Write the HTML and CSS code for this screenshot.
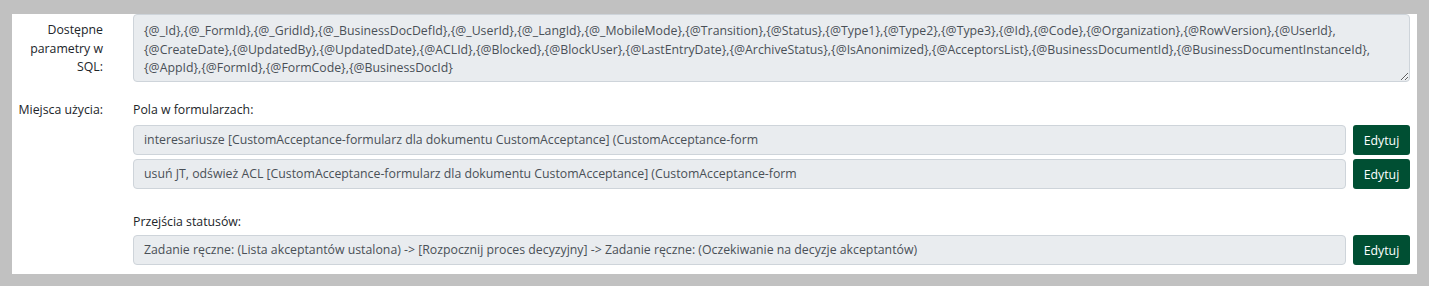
FILE: index.html
```html
<!DOCTYPE html>
<html lang="pl">
<head>
<meta charset="utf-8">
<title>Parametry</title>
<link rel="stylesheet" href="styles.css">
</head>
<body>
<div class="panel">
  <div class="row">
    <div class="label multi">Dostępne parametry w SQL:</div>
    <div class="content">
      <textarea class="params" readonly>{@_Id},{@_FormId},{@_GridId},{@_BusinessDocDefId},{@_UserId},{@_LangId},{@_MobileMode},{@Transition},{@Status},{@Type1},{@Type2},{@Type3},{@Id},{@Code},{@Organization},{@RowVersion},{@UserId},
{@CreateDate},{@UpdatedBy},{@UpdatedDate},{@ACLId},{@Blocked},{@BlockUser},{@LastEntryDate},{@ArchiveStatus},{@IsAnonimized},{@AcceptorsList},{@BusinessDocumentId},{@BusinessDocumentInstanceId},
{@AppId},{@FormId},{@FormCode},{@BusinessDocId}</textarea>
    </div>
  </div>
  <div class="row usage">
    <div class="label single">Miejsca użycia:</div>
    <div class="content">
      <div class="section-title">Pola w formularzach:</div>
      <div class="group">
        <div class="field">interesariusze [CustomAcceptance-formularz dla dokumentu CustomAcceptance] (CustomAcceptance-form</div>
        <button class="btn">Edytuj</button>
      </div>
      <div class="group">
        <div class="field">usuń JT, odśwież ACL [CustomAcceptance-formularz dla dokumentu CustomAcceptance] (CustomAcceptance-form</div>
        <button class="btn">Edytuj</button>
      </div>
      <div class="section-title second">Przejścia statusów:</div>
      <div class="group">
        <div class="field">Zadanie ręczne: (Lista akceptantów ustalona) -&gt; [Rozpocznij proces decyzyjny] -&gt; Zadanie ręczne: (Oczekiwanie na decyzje akceptantów)</div>
        <button class="btn">Edytuj</button>
      </div>
    </div>
  </div>
</div>
</body>
</html>
```
FILE: styles.css
```css
html, body {
  margin: 0;
  padding: 0;
}
body {
  background: #c1c1c1;
  font-family: "Open Sans", "Noto Sans", sans-serif;
  font-size: 12.3px;
  color: #212529;
  padding: 14px 12px 12px 12px;
  height: 286px;
  box-sizing: border-box;
}
.panel {
  background: #ffffff;
  height: 260px;
  padding: 0 7px 0 0;
  box-sizing: border-box;
}
.row {
  display: flex;
}
.label {
  width: 121px;
  flex: none;
  box-sizing: border-box;
  padding: 0 30px 0 8px;
  text-align: right;
  line-height: 18.5px;
  color: #212529;
}
.label.multi {
  padding-top: 7px;
}
.label.single {
  white-space: nowrap;
  padding-left: 0;
}
.content {
  flex: 1;
  min-width: 0;
}
.params {
  display: block;
  width: 100%;
  height: 68px;
  box-sizing: border-box;
  margin: 0;
  padding: 7px 10px;
  border: 1px solid #ced4da;
  border-radius: 4px;
  background: #e9ecef;
  color: #495057;
  font-family: inherit;
  font-size: 12.3px;
  line-height: 18.5px;
  resize: vertical;
  overflow: hidden;
  white-space: pre-wrap;
}
.usage {
  margin-top: 19px;
}
.usage .label {
  line-height: 18px;
}
.section-title {
  line-height: 18px;
  margin-bottom: 6px;
}
.section-title.second {
  margin-top: 24px;
  margin-bottom: 4px;
}
.group {
  display: flex;
  gap: 7px;
  margin-bottom: 4px;
}
.field {
  flex: 1;
  height: 30px;
  box-sizing: border-box;
  padding: 0 10px;
  border: 1px solid #ced4da;
  border-radius: 4px;
  background: #e9ecef;
  color: #495057;
  line-height: 28px;
  white-space: nowrap;
  overflow: hidden;
}
.btn {
  flex: none;
  width: 57px;
  height: 30px;
  border: none;
  border-radius: 3px;
  background: #004f33;
  color: #ffffff;
  font-family: inherit;
  font-size: 12.3px;
  padding: 0;
}
```
